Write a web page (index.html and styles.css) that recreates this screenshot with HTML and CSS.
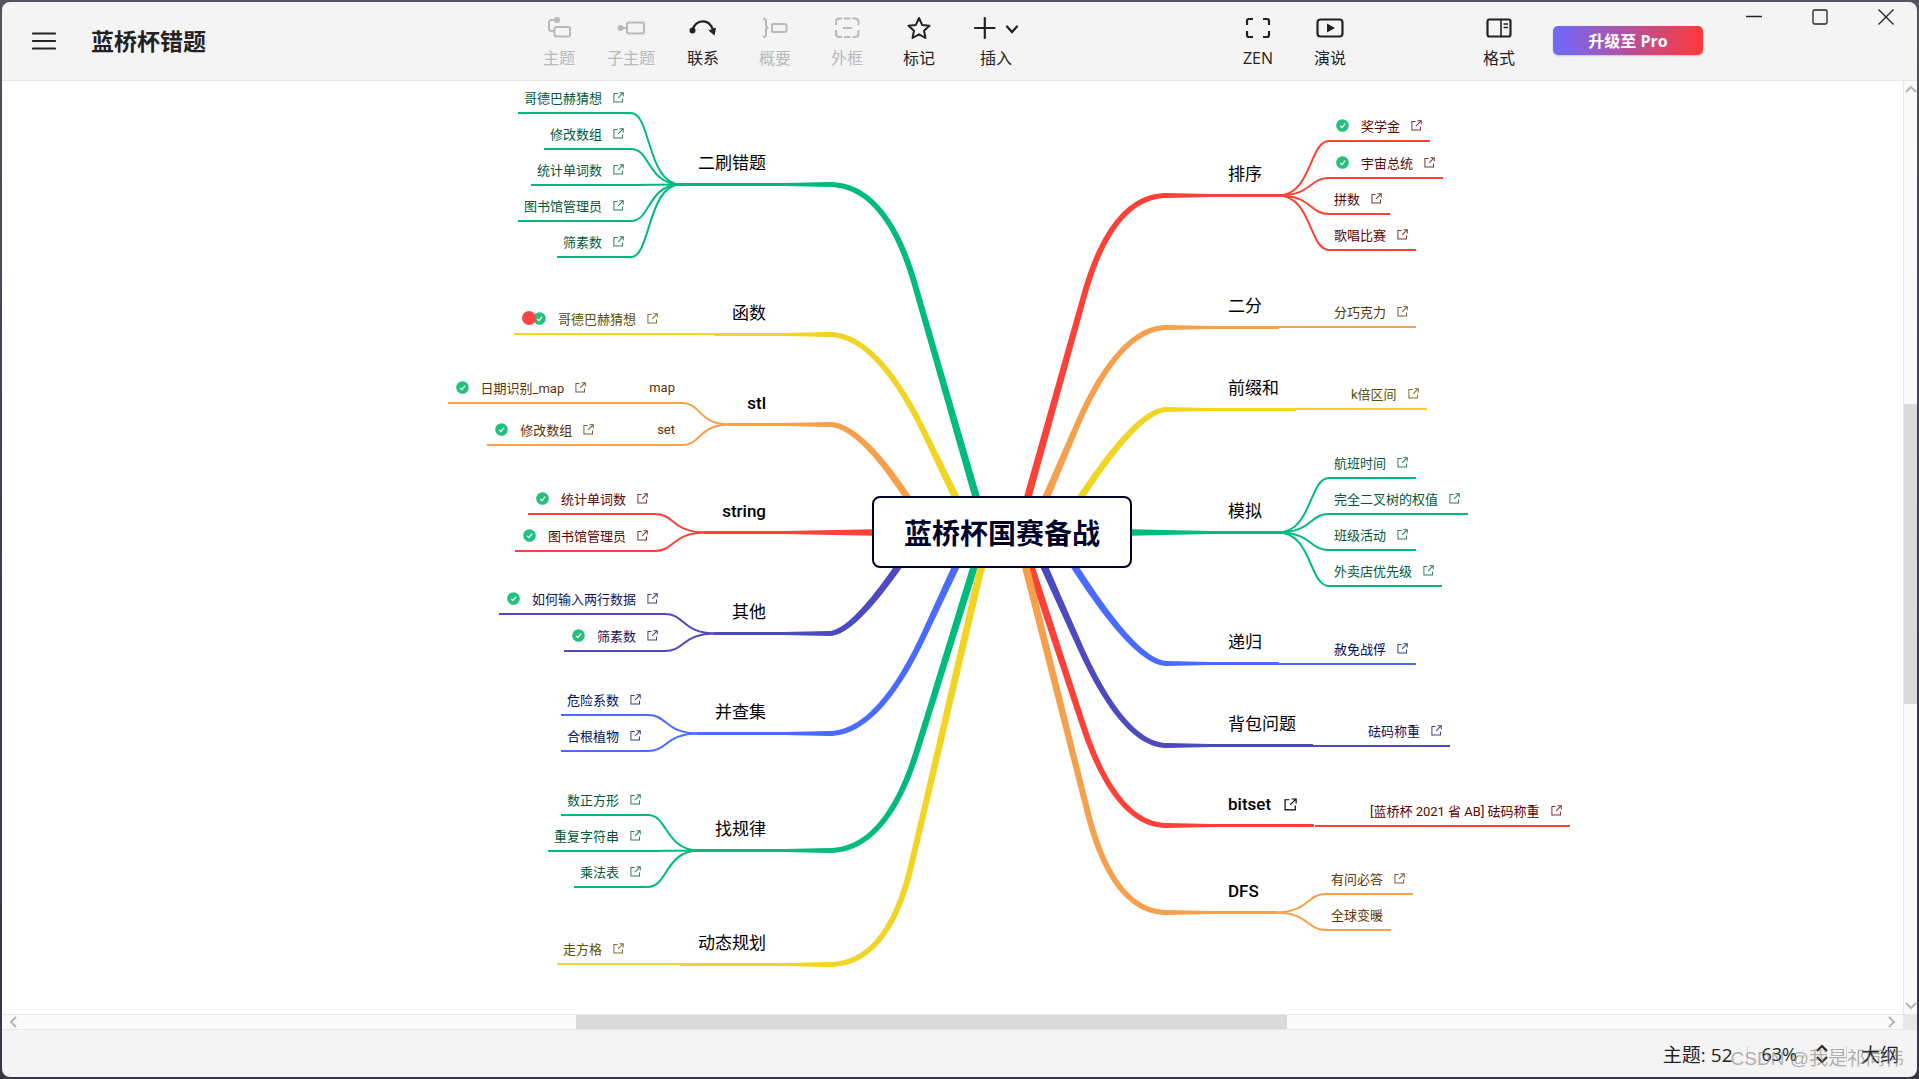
FILE: index.html
```html
<!DOCTYPE html>
<html lang="zh-CN">
<head>
<meta charset="utf-8">
<title>蓝桥杯错题</title>
<link rel="stylesheet" href="styles.css">
</head>
<body>
<svg class="defs" aria-hidden="true">
  <symbol id="link" viewBox="0 0 12 12"><path d="M5 1.6H1v9.4h9.4V7M7 .9h4.2V5M11 1 5.6 6.4" fill="none" stroke="currentColor" stroke-width="1.1"/></symbol>
  <symbol id="done" viewBox="0 0 14 14"><circle cx="7" cy="7" r="6.8" fill="#23c17e"/><path d="m4.4 7.4 1.9 1.9 3.6-4.4" fill="none" stroke="#fff" stroke-width="1.3"/></symbol>
</svg>
<div class="window">
  <header class="toolbar">
    <button class="menu" aria-label="菜单"><svg width="24" height="20" viewBox="0 0 24 20"><path d="M1 2.5h22M1 10h22M1 17.500h22" stroke="#222" stroke-width="2.2" stroke-linecap="round"/></svg></button>
    <h1 class="title">蓝桥杯错题</h1>
    <span class="space space-a"></span>
    <nav class="tools">
      <button class="tool" disabled><svg width="28" height="24" viewBox="0 0 28 24"><g fill="none" stroke="currentColor" stroke-width="2"><path d="M10.500 4H6.500Q4 4 4 6.500v6Q4 15 6.500 15H9"/><rect x="9.500" y="11" width="15.500" height="9.500" rx="1.500"/></g><circle cx="12" cy="4" r="3" fill="currentColor"/></svg>主题</button>
      <button class="tool" disabled><svg width="28" height="24" viewBox="0 0 28 24"><path d="M3 12h7" stroke="currentColor" stroke-width="2"/><circle cx="3.500" cy="12" r="3" fill="currentColor"/><rect x="10" y="6.500" width="17" height="11" rx="2" fill="none" stroke="currentColor" stroke-width="2"/></svg>子主题</button>
      <button class="tool"><svg width="28" height="24" viewBox="0 0 28 24"><path d="M3.500 14C7 3 20 2 24 14" fill="none" stroke="currentColor" stroke-width="2.200"/><circle cx="3.500" cy="14.500" r="3" fill="currentColor"/><path d="m19.500 14.500 7.500-3-1.500 8z" fill="currentColor"/></svg>联系</button>
      <button class="tool" disabled><svg width="28" height="24" viewBox="0 0 28 24"><g fill="none" stroke="currentColor" stroke-width="2"><path d="M2 2.500q3 0 3 2.500v4q0 2.500 2.500 2.500Q5 11.500 5 14v4.500Q5 21 2 21"/><rect x="11" y="8" width="14.500" height="8" rx="1"/></g></svg>概要</button>
      <button class="tool" disabled><svg width="28" height="24" viewBox="0 0 28 24"><path d="M3 9V6q0-3.500 3.500-3.500H9M3 14v3.500Q3 21 6.500 21H9M25.500 9V6q0-3.500-3.500-3.500h-2.500M25.500 14v3.500q0 3.500-3.500 3.500h-2.500M11 2.500h6.500M11 21h6.500M10 12h9" fill="none" stroke="currentColor" stroke-width="2"/></svg>外框</button>
      <button class="tool"><svg width="28" height="24" viewBox="0 0 28 24"><path d="m14 2 3.100 6.900 7.400.8-5.500 5 1.500 7.300-6.500-3.700L7.500 22 9 14.700l-5.500-5 7.400-.8z" fill="none" stroke="currentColor" stroke-width="2" stroke-linejoin="round"/></svg>标记</button>
      <button class="tool tool-wide"><svg width="46" height="24" viewBox="0 0 46 24"><path d="M2 12h19.500M11.800 2v20M34 10.500l5 5.500 5-5.500" fill="none" stroke="currentColor" stroke-width="2.200" stroke-linecap="round"/></svg>插入</button>
    </nav>
    <span class="space space-b"></span>
    <nav class="tools">
      <button class="tool"><svg width="28" height="24" viewBox="0 0 28 24"><path d="M3 9V5q0-2 2-2h4M3 15v4q0 2 2 2h4M19 3h4q2 0 2 2v4M25 15v4q0 2-2 2h-4" fill="none" stroke="currentColor" stroke-width="2.200"/></svg>ZEN</button>
      <button class="tool"><svg width="28" height="24" viewBox="0 0 28 24"><rect x="1.500" y="3.500" width="25" height="17" rx="3" fill="none" stroke="currentColor" stroke-width="2.200"/><path d="m11 7.500 8 4.500-8 4.500z" fill="currentColor"/></svg>演说</button>
    </nav>
    <span class="space space-c"></span>
    <button class="tool"><svg width="28" height="24" viewBox="0 0 28 24"><rect x="2.500" y="3.500" width="23" height="17" rx="2" fill="none" stroke="currentColor" stroke-width="2.200"/><path d="M16 3.500v17M18.500 8H23M18.500 11.500H23" stroke="currentColor" stroke-width="1.600"/></svg>格式</button>
    <button class="upgrade">升级至 Pro</button>
    <div class="controls">
      <button aria-label="最小化"><svg width="16" height="16" viewBox="0 0 16 16"><path d="M0 7.500h16"/></svg></button>
      <button aria-label="最大化"><svg width="16" height="16" viewBox="0 0 16 16"><rect x="1" y="1" width="14" height="14" rx="1.500"/></svg></button>
      <button aria-label="关闭"><svg width="16" height="16" viewBox="0 0 16 16"><path d="m.5.5 15 15M15.500.5l-15 15"/></svg></button>
    </div>
  </header>

  <main class="workspace">
    <div class="canvas">
      <div class="map">
        <svg class="links" viewBox="2 81 1901 933" aria-hidden="true"></svg>
        <h2 class="root">蓝桥杯国赛备战</h2>

        <h3 class="topic left green t-redo">二刷错题</h3>
        <ul class="leaves left green l-redo">
          <li>哥德巴赫猜想<a href="#a1" aria-label="链接"><svg><use href="#link"/></svg></a></li>
          <li>修改数组<a href="#a2" aria-label="链接"><svg><use href="#link"/></svg></a></li>
          <li>统计单词数<a href="#a3" aria-label="链接"><svg><use href="#link"/></svg></a></li>
          <li>图书馆管理员<a href="#a4" aria-label="链接"><svg><use href="#link"/></svg></a></li>
          <li>筛素数<a href="#a5" aria-label="链接"><svg><use href="#link"/></svg></a></li>
        </ul>

        <h3 class="topic left yellow t-func">函数</h3>
        <ul class="leaves left single yellow l-func">
          <li class="marked"><i class="flag"></i><svg class="check behind"><use href="#done"/></svg>哥德巴赫猜想<a href="#b1" aria-label="链接"><svg><use href="#link"/></svg></a></li>
        </ul>

        <h3 class="topic latin left orange t-stl">stl</h3>
        <ul class="leaves left orange l-stl">
          <li class="marked"><svg class="check"><use href="#done"/></svg>日期识别_map<a href="#c1" aria-label="链接"><svg><use href="#link"/></svg></a><span class="parent">map</span></li>
          <li class="marked"><svg class="check"><use href="#done"/></svg>修改数组<a href="#c2" aria-label="链接"><svg><use href="#link"/></svg></a><span class="parent">set</span></li>
        </ul>

        <h3 class="topic latin left red t-string">string</h3>
        <ul class="leaves left red l-string">
          <li class="marked"><svg class="check"><use href="#done"/></svg>统计单词数<a href="#d1" aria-label="链接"><svg><use href="#link"/></svg></a></li>
          <li class="marked"><svg class="check"><use href="#done"/></svg>图书馆管理员<a href="#d2" aria-label="链接"><svg><use href="#link"/></svg></a></li>
        </ul>

        <h3 class="topic left indigo t-other">其他</h3>
        <ul class="leaves left indigo l-other">
          <li class="marked"><svg class="check"><use href="#done"/></svg>如何输入两行数据<a href="#e1" aria-label="链接"><svg><use href="#link"/></svg></a></li>
          <li class="marked"><svg class="check"><use href="#done"/></svg>筛素数<a href="#e2" aria-label="链接"><svg><use href="#link"/></svg></a></li>
        </ul>

        <h3 class="topic left blue t-union">并查集</h3>
        <ul class="leaves left blue l-union">
          <li>危险系数<a href="#f1" aria-label="链接"><svg><use href="#link"/></svg></a></li>
          <li>合根植物<a href="#f2" aria-label="链接"><svg><use href="#link"/></svg></a></li>
        </ul>

        <h3 class="topic left green t-rule">找规律</h3>
        <ul class="leaves left green l-rule">
          <li>数正方形<a href="#g1" aria-label="链接"><svg><use href="#link"/></svg></a></li>
          <li>重复字符串<a href="#g2" aria-label="链接"><svg><use href="#link"/></svg></a></li>
          <li>乘法表<a href="#g3" aria-label="链接"><svg><use href="#link"/></svg></a></li>
        </ul>

        <h3 class="topic left yellow t-dp">动态规划</h3>
        <ul class="leaves left single yellow l-dp">
          <li>走方格<a href="#h1" aria-label="链接"><svg><use href="#link"/></svg></a></li>
        </ul>

        <h3 class="topic right red t-sort">排序</h3>
        <ul class="leaves right red l-sort">
          <li class="marked"><svg class="check"><use href="#done"/></svg>奖学金<a href="#i1" aria-label="链接"><svg><use href="#link"/></svg></a></li>
          <li class="marked"><svg class="check"><use href="#done"/></svg>宇宙总统<a href="#i2" aria-label="链接"><svg><use href="#link"/></svg></a></li>
          <li>拼数<a href="#i3" aria-label="链接"><svg><use href="#link"/></svg></a></li>
          <li>歌唱比赛<a href="#i4" aria-label="链接"><svg><use href="#link"/></svg></a></li>
        </ul>

        <h3 class="topic right orange t-binary">二分</h3>
        <ul class="leaves right single orange l-binary">
          <li>分巧克力<a href="#j1" aria-label="链接"><svg><use href="#link"/></svg></a></li>
        </ul>

        <h3 class="topic right yellow t-prefix">前缀和</h3>
        <ul class="leaves right single yellow l-prefix">
          <li>k倍区间<a href="#k1" aria-label="链接"><svg><use href="#link"/></svg></a></li>
        </ul>

        <h3 class="topic right green t-sim">模拟</h3>
        <ul class="leaves right green l-sim">
          <li>航班时间<a href="#m1" aria-label="链接"><svg><use href="#link"/></svg></a></li>
          <li>完全二叉树的权值<a href="#m2" aria-label="链接"><svg><use href="#link"/></svg></a></li>
          <li>班级活动<a href="#m3" aria-label="链接"><svg><use href="#link"/></svg></a></li>
          <li>外卖店优先级<a href="#m4" aria-label="链接"><svg><use href="#link"/></svg></a></li>
        </ul>

        <h3 class="topic right blue t-recur">递归</h3>
        <ul class="leaves right single blue l-recur">
          <li>赦免战俘<a href="#n1" aria-label="链接"><svg><use href="#link"/></svg></a></li>
        </ul>

        <h3 class="topic right indigo t-bag">背包问题</h3>
        <ul class="leaves right single indigo l-bag">
          <li>砝码称重<a href="#o1" aria-label="链接"><svg><use href="#link"/></svg></a></li>
        </ul>

        <h3 class="topic latin right red t-bitset">bitset<a href="#p0" aria-label="链接"><svg><use href="#link"/></svg></a></h3>
        <ul class="leaves right single red l-bitset">
          <li>[蓝桥杯 2021 省 AB] 砝码称重<a href="#p1" aria-label="链接"><svg><use href="#link"/></svg></a></li>
        </ul>

        <h3 class="topic latin right orange t-dfs">DFS</h3>
        <ul class="leaves right orange l-dfs">
          <li>有问必答<a href="#q1" aria-label="链接"><svg><use href="#link"/></svg></a></li>
          <li>全球变暖</li>
        </ul>
      </div>
    </div>
    <div class="vbar">
      <svg width="12" height="8" viewBox="0 0 12 8"><path d="m1 7 5-5 5 5"/></svg>
      <div class="track"><span class="thumb"></span></div>
      <svg width="12" height="8" viewBox="0 0 12 8"><path d="m1 1 5 5 5-5"/></svg>
    </div>
    <div class="hbar">
      <svg width="8" height="12" viewBox="0 0 8 12"><path d="M7 1 2 6l5 5"/></svg>
      <div class="track"><span class="thumb"></span></div>
      <svg width="8" height="12" viewBox="0 0 8 12"><path d="m1 1 5 5-5 5"/></svg>
    </div>
    <div class="corner"></div>
  </main>

  <footer class="status">
    <span>主题: 52</span>
    <span class="rule"></span>
    <button class="zoom">63%<svg width="12" height="20" viewBox="0 0 12 20"><path d="m1 7 5-5 5 5M1 13l5 5 5-5" fill="none" stroke="#222" stroke-width="2"/></svg></button>
    <span class="rule"></span>
    <button class="outline">大纲</button>
  </footer>
  <div class="watermark">CSDN @我是祁同伟</div>
</div>
<script src="map.js"></script>
</body>
</html>
```
FILE: styles.css
```css
* { box-sizing: border-box; }
body {
  margin: 0;
  height: 100vh;
  padding: 2px;
  background: linear-gradient(#56515f, #3d3850 60%, #3a3648);
  font-family: "Open Sans", "Noto Sans CJK SC", sans-serif;
  color: #222;
}
button { font: inherit; color: inherit; background: none; border: 0; padding: 0; }
.defs { display: none; }
.window {
  position: relative;
  height: 100%;
  display: flex;
  flex-direction: column;
  background: #f4f4f4;
  border-radius: 8px;
  overflow: hidden;
}

/* toolbar */
.toolbar {
  display: flex;
  align-items: flex-start;
  height: 79px;
  flex: none;
  padding-left: 30px;
  border-bottom: 1px solid #e4e4e4;
}
.menu { margin-top: 29px; width: 24px; height: 20px; }
.menu svg { display: block; }
.title { margin: 23px 0 0 35px; font-size: 23px; line-height: 32px; font-weight: 700; }
.space-a { flex: 317; }
.space-b { flex: 185; }
.space-c { flex: 97; }
.tools { display: flex; }
.tool {
  width: 72px;
  margin-top: 14px;
  display: flex;
  flex-direction: column;
  align-items: center;
  gap: 6px;
  font-size: 16px;
  line-height: 24px;
}
.tool-wide { width: 82px; }
.tool:disabled { color: #b9b9b9; }
.upgrade {
  margin: 24px 20px 0 18px;
  width: 150px;
  height: 29px;
  border-radius: 5px;
  background: linear-gradient(90deg, #6c6aff, #ff3838);
  box-shadow: 0 1px 2px #0003;
  color: #fff;
  font-size: 16px;
  line-height: 28px;
  font-weight: 700;
}
.controls { display: flex; gap: 4px; }
.controls button { width: 62px; height: 30px; }
.controls svg { display: block; margin: auto; fill: none; stroke: #222; stroke-width: 1.3; }

/* workspace */
.workspace {
  flex: 1;
  min-height: 0;
  display: grid;
  grid-template: minmax(0, 1fr) 16px / minmax(0, 1fr) 14px;
}
.canvas { position: relative; overflow: hidden; background: #fff; }
.vbar, .hbar { display: flex; align-items: center; background: #fafafa; }
.vbar { flex-direction: column; border-left: 1px solid #e7e7e7; padding: 4px 0; }
.hbar { border-top: 1px solid #e7e7e7; border-bottom: 1px solid #e7e7e7; padding: 0 7px; }
.vbar svg, .hbar svg { fill: none; stroke: #b5b5b5; stroke-width: 2; flex: none; }
.track { flex: 1; display: flex; align-self: stretch; }
.vbar .track { flex-direction: column; }
.thumb { background: #dadada; }
.vbar .thumb { height: 33%; margin-top: 311px; }
.hbar .thumb { width: 38%; margin-left: 559px; }
.corner { background: #e7e7e7; }

/* mind map */
.map {
  position: absolute;
  left: 0;
  top: 0;
  width: 1901px;
  height: 933px;
  font-family: Roboto, "Noto Sans CJK SC", sans-serif;
}
.links { position: absolute; left: 0; top: 0; width: 1901px; height: 933px; }
.root {
  position: absolute;
  left: 870px;
  top: 415px;
  width: 260px;
  height: 72px;
  margin: 0;
  padding-top: 3px;
  border: 2px solid #000229;
  border-radius: 8px;
  background: #fff;
  color: #000229;
  font-size: 28px;
  line-height: 68px;
  font-weight: 700;
  text-align: center;
}
.green { --line: #00bc7b; --ink: #00593a; }
.yellow { --line: #f2d425; --ink: #5c5000; }
.orange { --line: #f7a04c; --ink: #5c3204; }
.red { --line: #fc4238; --ink: #5c0500; }
.indigo { --line: #4d49be; --ink: #15135a; }
.blue { --line: #4a6bff; --ink: #00125c; }
.topic {
  position: absolute;
  display: flex;
  align-items: center;
  gap: 13px;
  height: 43px;
  margin: 0;
  padding: 0 17px 3px;
  border-bottom: 3px solid var(--line);
  color: #000;
  font-size: 17px;
  font-weight: 400;
  white-space: nowrap;
}
.topic.left { right: 1119px; padding: 0 18px 3px; }
.topic.right { left: 1209px; }
.topic.latin { padding-bottom: 0; font-weight: 500; }
.topic a, .leaves a { display: block; color: inherit; }
.topic a svg { display: block; width: 13px; height: 13px; }
.leaves {
  position: absolute;
  display: flex;
  flex-direction: column;
  margin: 0;
  padding: 0;
  list-style: none;
  color: var(--ink);
  font-size: 13px;
  white-space: nowrap;
}
.leaves.left { align-items: flex-end; }
.leaves.right { align-items: flex-start; }
.leaves li {
  display: flex;
  align-items: center;
  height: 36px;
  padding: 4px 8px 0 6px;
  border-bottom: 2px solid var(--line);
}
.leaves .marked { height: 37px; padding: 5px 8px 0; }
.leaves a { margin-left: 11px; opacity: .8; }
.leaves a svg { display: block; width: 11px; height: 11px; }
.leaves.left.single li { padding-right: 57px; }
.leaves.right.single li { padding-left: 55px; }
.check { width: 13px; height: 13px; margin-right: 12px; }
.flag { width: 14px; height: 14px; border-radius: 7px; background: #fc4545; z-index: 1; }
.behind { margin-left: -3px; }
.parent { margin-left: 63px; }

.t-redo { top: 62px; }
.t-func { top: 212px; }
.t-stl { top: 302px; }
.t-string { top: 410px; }
.t-other { top: 511px; }
.t-union { top: 611px; }
.t-rule { top: 728px; }
.t-dp { top: 842px; }
.t-sort { top: 73px; }
.t-binary { top: 205px; }
.t-prefix { top: 287px; }
.t-sim { top: 410px; }
.t-recur { top: 541px; }
.t-bag { top: 623px; }
.t-bitset { top: 703px; }
.t-dfs { top: 790px; }

.l-redo { right: 1271px; top: -3px; }
.l-func { right: 1188px; top: 217px; }
.l-stl { right: 1220px; top: 286px; gap: 5px; }
.l-string { right: 1247px; top: 397px; }
.l-other { right: 1237px; top: 497px; }
.l-union { right: 1254px; top: 599px; }
.l-rule { right: 1254px; top: 699px; }
.l-dp { right: 1222px; top: 848px; }
.l-sort { left: 1326px; top: 24px; }
.l-binary { left: 1277px; top: 211px; }
.l-prefix { left: 1294px; top: 293px; }
.l-sim { left: 1326px; top: 362px; }
.l-recur { left: 1277px; top: 548px; }
.l-bag { left: 1311px; top: 630px; }
.l-bitset { left: 1313px; top: 710px; }
.l-dfs { left: 1323px; top: 778px; }

/* status bar */
.status {
  flex: none;
  height: 47px;
  display: flex;
  align-items: center;
  justify-content: flex-end;
  padding-right: 18px;
  font-size: 19px;
}
.rule { width: 1px; height: 16px; margin: 0 14px; background: #d5d5d5; }
.zoom { display: flex; align-items: center; gap: 19px; padding-right: 4px; font-size: 18px; }
.watermark {
  position: absolute;
  right: 13px;
  bottom: 4px;
  color: #80808099;
  font-family: "Liberation Sans", "Noto Sans CJK SC", sans-serif;
  font-size: 19px;
  line-height: 28px;
}
```
FILE: map.js
```js
// Draws the connectors of the mind map.
const colors = { green: '#00bc7b', yellow: '#f2d425', orange: '#f7a04c', red: '#fc4238', indigo: '#4d49be', blue: '#4a6bff' };
const svg = document.querySelector('.links');

function add(attrs) {
  const p = document.createElementNS('http://www.w3.org/2000/svg', 'path');
  for (const k in attrs) p.setAttribute(k, attrs[k]);
  svg.append(p);
}

// Tapered trunk: thin at the topic, thick at the root box.
// y: topic line, bend: x where the straight part meets that line, end: x on the box edge
function trunk(side, color, y, bend, end) {
  const x0 = side === 'left' ? 829 : 1167;
  const tip = side === 'left' ? 784 : 1211;
  const pts = [[tip, y, 3], [x0, y, 5]];
  if (bend === null) {
    pts.pop();
    pts.push([side === 'left' ? 873 : 1131, y, 6.5]);
  } else {
    const edge = y < 532 ? 500 : 564;
    const full = Math.abs(edge - y);
    const t = Math.min(1, 100 / full);
    const ex = bend + (end - bend) * t, ey = y + (edge - y) * t;
    for (let i = 1; i <= 30; i++) {
      const s = i / 30, r = 1 - s;
      pts.push([r * r * x0 + 2 * r * s * bend + s * s * ex, r * r * y + 2 * r * s * y + s * s * ey, 5 + s * (t < 1 ? 1 : 2)]);
    }
    if (t < 1) pts.push([end, edge, 7.5]);
  }
  const a = [], b = [];
  pts.forEach((p, i) => {
    const q = pts[Math.max(0, i - 1)], n = pts[Math.min(pts.length - 1, i + 1)];
    const dx = n[0] - q[0], dy = n[1] - q[1], l = Math.hypot(dx, dy), h = p[2] / 2;
    a.push(`${p[0] - dy / l * h},${p[1] + dx / l * h}`);
    b.unshift(`${p[0] + dy / l * h},${p[1] - dx / l * h}`);
  });
  add({ d: 'M' + a.concat(b).join('L') + 'Z', fill: colors[color] });
}

// Fan of thin curves from a topic to its leaves.
function fan(color, join, y, leaf, ys) {
  const k = Math.sign(join - leaf);
  for (const v of ys) {
    add({ d: `M${leaf},${v}C${leaf + 20 * k},${v} ${join - 34 * k},${y} ${join},${y}`, fill: 'none', stroke: colors[color], 'stroke-width': 2 });
  }
}

trunk('left', 'green', 184.5, 886, 977);
trunk('left', 'yellow', 334.5, 877, 957);
trunk('left', 'orange', 424.5, 860, 909);
trunk('left', 'red', 532.5, null);
trunk('left', 'indigo', 633.5, 852, 900);
trunk('left', 'blue', 733.5, 878, 957);
trunk('left', 'green', 850.5, 886, 975);
trunk('left', 'yellow', 964.5, 888, 982);
trunk('right', 'red', 195.5, 1112, 1027);
trunk('right', 'orange', 327.5, 1119, 1045);
trunk('right', 'yellow', 409.5, 1138, 1079);
trunk('right', 'green', 532.5, null);
trunk('right', 'blue', 663.5, 1136, 1073);
trunk('right', 'indigo', 745.5, 1124, 1043);
trunk('right', 'red', 825.5, 1116, 1030);
trunk('right', 'orange', 912.5, 1113, 1025);

fan('green', 681, 184.5, 631, [113, 149, 185, 221, 257]);
fan('orange', 731, 424.5, 682, [403, 445]);
fan('red', 706, 532.5, 655, [514, 551]);
fan('indigo', 716, 633.5, 665, [614, 651]);
fan('blue', 699, 733.5, 648, [715, 751]);
fan('green', 699, 850.5, 648, [815, 851, 887]);
fan('red', 1278, 195.5, 1329, [141, 178, 214, 250]);
fan('green', 1278, 532.5, 1329, [478, 514, 550, 586]);
fan('orange', 1275, 912.5, 1326, [894, 930]);
```
